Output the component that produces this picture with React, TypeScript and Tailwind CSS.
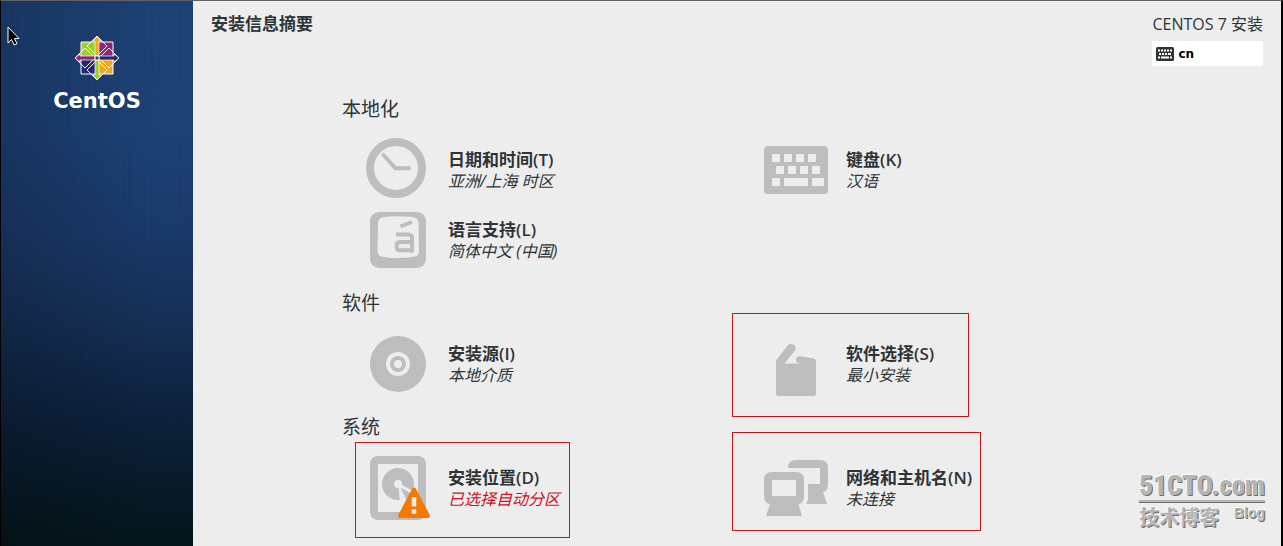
import type { ReactNode } from "react";
import clsx from "clsx";

interface Spoke {
  id: string;
  title: string;
  status: string;
  icon: ReactNode;
  warning?: boolean;
  // Red annotation frame drawn around the item
  frame?: string;
}

interface Category {
  name: string;
  spokes: Spoke[];
}

function ClockIcon() {
  return (
    <svg viewBox="0 0 64 64" className="w-16 h-16 shrink-0" fill="none" stroke="#bdbdbd">
      <circle cx="30" cy="30" r="26" strokeWidth="8" />
      <path d="M17.5 17 29.5 30.3H43" strokeWidth="4" strokeLinecap="round" strokeLinejoin="round" />
    </svg>
  );
}

function KeyboardIcon() {
  return (
    <svg viewBox="0 0 64 64" className="w-16 h-16 shrink-0">
      <rect y="8" width="64" height="48" rx="4" fill="#bdbdbd" />
      <path
        fill="#ededed"
        d="M8 16h8v8H8zM20 16h8v8h-8zM32 16h8v8h-8zM44 16h8v8h-8zM12 28h8v8h-8zM24 28h8v8h-8zM36 28h8v8h-8zM48 28h8v8h-8zM8 40h8v8H8zM20 40h24v8H20zM48 40h12v8H48z"
      />
    </svg>
  );
}

function LanguageIcon() {
  return (
    <svg viewBox="0 0 64 64" className="w-16 h-16 shrink-0">
      <rect x="4" y="4" width="56" height="56" rx="9" fill="#bdbdbd" />
      <path
        fill="#ededed"
        d="M18 9Q32 7.500 46 9Q52 9.500 52.500 15L53 43Q53 47.500 49 48.500Q32 51.500 15 48.500Q11.500 47.500 11.500 43L12 15Q12.500 9.500 18 9Z"
      />
      <g fill="none" stroke="#bdbdbd" strokeWidth="4">
        <path d="M34.500 18.500 46 14" />
        <path d="M30 26.500H42Q46 26.500 46 30V44.500" />
        <path d="M46 34H34Q30.500 34 30.500 38Q30.500 42.300 34 42.300H46" />
      </g>
    </svg>
  );
}

function DiscIcon() {
  return (
    <svg viewBox="0 0 64 64" className="w-16 h-16 shrink-0">
      <circle cx="32" cy="32" r="28" fill="#bdbdbd" />
      <circle cx="32" cy="32" r="12" fill="#ededed" />
      <circle cx="32" cy="32" r="8" fill="#bdbdbd" />
      <circle cx="32" cy="32" r="4" fill="#ededed" />
    </svg>
  );
}

function PackageIcon() {
  return (
    <svg viewBox="0 0 64 64" className="w-16 h-16 shrink-0">
      <path
        fill="#bdbdbd"
        d="M12 28.500 23.500 13.800Q26 11 29.500 12.500Q33 15 31 18.500L20.500 31.500H37L34 30.700Q31.500 29.500 32.200 26.500Q33 24 36 24.200L50 26.500Q52 27 52 29V61Q52 64 49 64H15Q12 64 12 61Z"
      />
    </svg>
  );
}

function DiskIcon() {
  return (
    <svg viewBox="0 0 64 64" className="w-16 h-16 shrink-0">
      <rect x="4" width="56" height="64" rx="8" fill="#bdbdbd" />
      <path d="M12 8h40v48H12z" fill="#ededed" />
      <circle cx="32" cy="28" r="16" fill="#bdbdbd" />
      <path d="M32 27 34 46 49 46 49 36Z" fill="#ededed" />
      <path d="M34.500 31.500 41 45 46 38Z" fill="#bdbdbd" />
      <circle cx="32" cy="28" r="4" fill="#ededed" />
      <path
        d="M48 33.500 34 60H62Z"
        fill="#f57900"
        stroke="#f57900"
        strokeWidth="4"
        strokeLinejoin="round"
      />
      <path d="M45.700 41h4.600v9.500h-4.600zM45.700 53.300h4.600v4.400h-4.600z" fill="#ededed" />
    </svg>
  );
}

function NetworkIcon() {
  return (
    <svg viewBox="0 0 64 64" className="w-16 h-16 shrink-0" fill="#bdbdbd">
      <path d="M24 12Q24 4 32 4H56Q64 4 64 12V28Q64 35.500 59 36L63 48H42L44 44V28H56V12Z" />
      <path
        fillRule="evenodd"
        d="M8 16H32Q40 16 40 24V40Q40 47 34.500 48L38 60H2L6 48Q0 47 0 40V24Q0 16 8 16ZM8 24V40H32V24Z"
      />
    </svg>
  );
}

function CentosLogo() {
  return (
    <svg viewBox="0 0 46 46" className="w-[46px] h-[46px]">
      <g stroke="#fff" strokeWidth="1">
        <path d="M7 7h15.500v15.500H7z" fill="#9ccd2a" />
        <path d="M23.500 7H39v15.500H23.500z" fill="#932279" />
        <path d="M7 23.500h15.500V39H7z" fill="#262577" />
        <path d="M23.500 23.500H39V39H23.500z" fill="#efa724" />
      </g>
      <g fill="none" stroke="#fff" strokeWidth="1">
        <path d="M23 1 33 11 23 21 13 11ZM23 25 33 35 23 45 13 35ZM1 23 11 13 21 23 11 33ZM25 23 35 13 45 23 35 33Z" />
      </g>
      <g stroke="#fff" strokeWidth=".7">
        <path d="M23 1 27 6H25V21H21V6H19Z" fill="#efa724" />
        <path d="M45 23 40 27V25H25V21H40V19Z" fill="#262577" />
        <path d="M23 45 19 40H21V25H25V40H27Z" fill="#9ccd2a" />
        <path d="M1 23 6 19V21H21V25H6V27Z" fill="#932279" />
      </g>
      <path d="M20.500 20.500h5v5h-5z" fill="#fff" />
      <path d="M21.500 21.500h3v3h-3z" fill="#1d3f75" />
    </svg>
  );
}

function LayoutIcon() {
  return (
    <svg viewBox="0 0 18 14" className="w-[18px] h-[14px]">
      <rect width="18" height="14" rx="1.500" fill="#2e3436" />
      <path
        fill="#fff"
        d="M2 2.500h2v2H2zM5 2.500h2v2H5zM8 2.500h2v2H8zM11 2.500h2v2h-2zM14 2.500h2v2h-2zM3 6h2v2H3zM6 6h2v2H6zM9 6h2v2H9zM12 6h3v2h-3zM2 9.500h2v2H2zM5 9.500h8v2H5zM14 9.500h2v2h-2z"
      />
    </svg>
  );
}

const categories: Category[] = [
  {
    name: "本地化",
    spokes: [
      { id: "datetime", title: "日期和时间(T)", status: "亚洲/上海 时区", icon: <ClockIcon /> },
      { id: "keyboard", title: "键盘(K)", status: "汉语", icon: <KeyboardIcon /> },
      { id: "language", title: "语言支持(L)", status: "简体中文 (中国)", icon: <LanguageIcon /> },
    ],
  },
  {
    name: "软件",
    spokes: [
      { id: "source", title: "安装源(I)", status: "本地介质", icon: <DiscIcon /> },
      {
        id: "software",
        title: "软件选择(S)",
        status: "最小安装",
        icon: <PackageIcon />,
        frame: "-left-8 -top-[19px] w-[237px] h-[104px]",
      },
    ],
  },
  {
    name: "系统",
    spokes: [
      {
        id: "storage",
        title: "安装位置(D)",
        status: "已选择自动分区",
        icon: <DiskIcon />,
        warning: true,
        frame: "-left-[11px] -top-[14px] w-[215px] h-24",
      },
      {
        id: "network",
        title: "网络和主机名(N)",
        status: "未连接",
        icon: <NetworkIcon />,
        frame: "-left-8 -top-6 w-[249px] h-[99px]",
      },
    ],
  },
];

function SpokeButton({ spoke }: { spoke: Spoke }) {
  return (
    <button type="button" className="relative flex items-center gap-[18px] text-left">
      {spoke.icon}
      <span className="flex flex-col whitespace-nowrap">
        <span className="text-[17px] leading-[22px] font-semibold">{spoke.title}</span>
        <span className={clsx("text-base leading-5 italic", spoke.warning && "text-[#d01028]")}>
          {spoke.status}
        </span>
      </span>
      {spoke.frame && (
        <span className={clsx("absolute border border-[#c4161c] pointer-events-none", spoke.frame)} />
      )}
    </button>
  );
}

function Sidebar() {
  return (
    <aside className="w-48 shrink-0 flex flex-col items-center pt-[34px] bg-[repeating-linear-gradient(90deg,transparent_0px,rgba(0,0,0,0.03)_4px,transparent_7px),linear-gradient(90deg,rgba(0,0,0,0.18),transparent_80%),linear-gradient(180deg,#1d4276_0%,#1d4177_24%,#1a3a6c_42%,#142f55_60%,#0c203a_78%,#071a28_90%,#04161b_100%)]">
      <CentosLogo />
      <span className="mt-2 text-[21px] leading-6 font-bold text-white font-['DejaVu_Sans',sans-serif]">
        CentOS
      </span>
    </aside>
  );
}

function Watermark() {
  return (
    <div className="absolute right-4 bottom-[15px] flex flex-col text-[#b4b4b4] font-bold [text-shadow:-1px_-1px_0_#fafafa,1px_1px_0_#6e6e6e]">
      <span className="text-[27px] leading-7 font-black font-['Roboto_Condensed','Liberation_Sans',sans-serif]">
        51CTO.com
      </span>
      <span className="h-[3px] bg-[#b4b4b4] border-b border-[#6e6e6e]" />
      <span className="flex justify-between items-start">
        <span className="text-[20px] leading-7 font-['Noto_Sans_CJK_SC',sans-serif]">技术博客</span>
        <span className="text-sm leading-5 font-['Liberation_Sans',sans-serif]">Blog</span>
      </span>
    </div>
  );
}

export default function App() {
  return (
    <div
      lang="zh-CN"
      className="relative min-h-screen flex bg-[#ededed] text-[#2e3436] border-t border-t-[#626266] border-l border-l-black border-r-2 border-r-black font-['Open_Sans','Noto_Sans_CJK_SC',sans-serif]"
    >
      <Sidebar />

      <div className="flex-1 min-w-0">
        <header className="flex justify-between items-start pt-3 px-[18px]">
          <h1 className="text-[17px] leading-[22px] font-bold">安装信息摘要</h1>
          <div className="flex flex-col">
            <span className="text-base leading-[22px]">CENTOS 7 安装</span>
            <button
              type="button"
              className="mt-1.5 h-[25px] px-1 flex items-center gap-1 bg-white text-black text-xs font-bold font-['DejaVu_Sans',sans-serif]"
            >
              <LayoutIcon />
              cn
            </button>
          </div>
        </header>

        <main className="w-full max-w-[790px] mx-auto pt-7 flex flex-col gap-4">
          {categories.map((category) => (
            <section key={category.name}>
              <h2 className="text-[19px] leading-[30px]">{category.name}</h2>
              <div className="mt-3.5 pl-6 grid grid-cols-2 gap-x-[30px] gap-y-1.5">
                {category.spokes.map((spoke) => (
                  <SpokeButton key={spoke.id} spoke={spoke} />
                ))}
              </div>
            </section>
          ))}
        </main>
      </div>

      <Watermark />

      {/* Mouse pointer */}
      <svg viewBox="0 0 13 20" className="absolute left-1.5 top-[25px] w-[13px] h-5">
        <path
          d="M1 1V17L4.500 13.500 7.200 19 10 17.700 7.500 12.500H12Z"
          fill="#000"
          stroke="#fff"
          strokeWidth="1"
        />
      </svg>
    </div>
  );
}
